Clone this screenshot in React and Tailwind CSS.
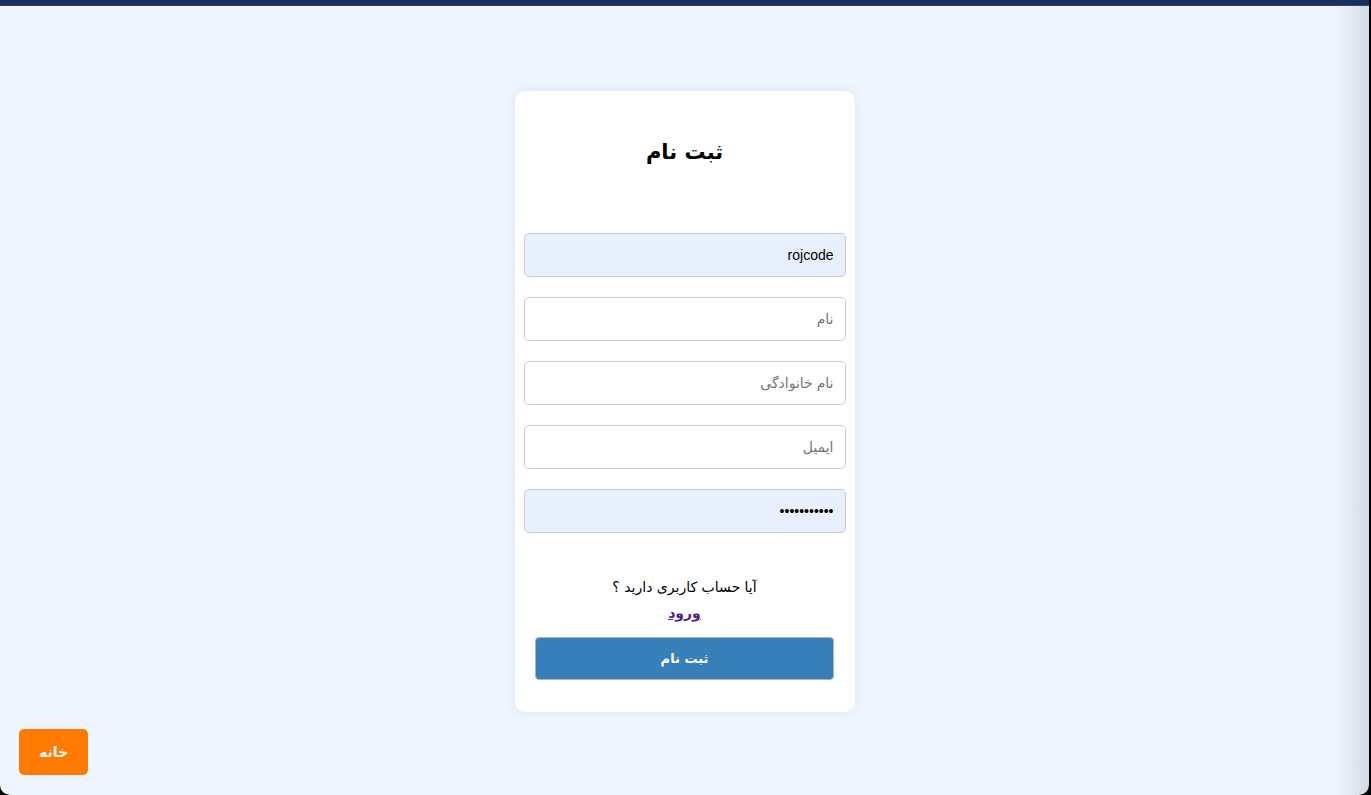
import React from 'react';

const fields = [
  { type: 'text', placeholder: 'نام کاربری', value: 'rojcode', filled: true },
  { type: 'text', placeholder: 'نام' },
  { type: 'text', placeholder: 'نام خانوادگی' },
  { type: 'email', placeholder: 'ایمیل' },
  { type: 'password', placeholder: 'رمز عبور', value: '12345678901', filled: true },
];

export default function App() {
  return (
    <div className="min-h-screen bg-black font-['DejaVu_Sans',sans-serif]">
      <div className="w-[calc(100%-2px)] min-h-[795px] rounded-b-[10px] flex flex-col bg-[linear-gradient(to_right,#eff6ff_calc(100%-34px),#d3dbe5)]">
        <div className="h-[6px] bg-[#17305c] border-b border-[#2a4675]" />

        <div
          dir="rtl"
          className="mt-[85px] self-center w-[340px] bg-white rounded-[10px] shadow-[0_0_12px_rgba(120,150,190,0.18)] px-[9px] pt-[41px] pb-[32px] flex flex-col items-center"
        >
          <h1 className="text-[21px] leading-[40px] font-bold text-black">ثبت نام</h1>

          <form className="w-full mt-[61px] flex flex-col gap-[20px]" onSubmit={(e) => e.preventDefault()}>
            {fields.map((f) => (
              <input
                key={f.placeholder}
                type={f.type}
                dir="rtl"
                placeholder={f.placeholder}
                defaultValue={f.value}
                className={`h-[44px] w-full rounded-[5px] border border-[#cccccc] px-[11px] text-[14px] text-black outline-none placeholder:text-[#757575] font-['Liberation_Sans','DejaVu_Sans',sans-serif] ${
                  f.filled ? 'bg-[#e8f0fe]' : 'bg-white'
                }`}
              />
            ))}
          </form>

          <p className="mt-[42px] text-[14px] leading-[24px] text-black">آیا حساب کاربری دارید ؟</p>
          <a href="#" className="mt-[2px] text-[14px] leading-[24px] font-bold text-[#551a8b] underline">ورود</a>

          <button className="mt-[12px] w-[299px] h-[43px] rounded-[4px] bg-[#377fb8] border border-[#aab4be] text-white text-[13px] font-bold">
            ثبت نام
          </button>
        </div>

        <div className="mt-[17px] pl-[19px] flex">
          <button dir="rtl" className="w-[69px] h-[46px] rounded-[5px] bg-[#ff7a00] text-white text-[14px] font-bold">
            خانه
          </button>
        </div>
      </div>
    </div>
  );
}
